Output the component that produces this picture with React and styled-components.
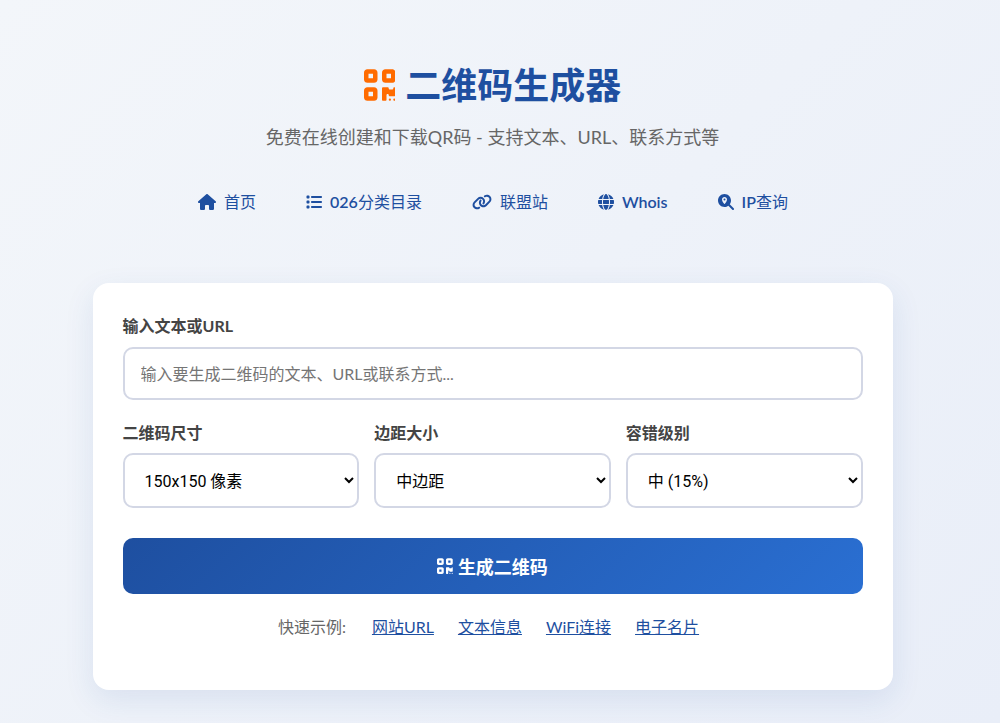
import React from "react";
import styled, { createGlobalStyle } from "styled-components";
import { FaQrcode, FaHouse, FaList, FaLink, FaGlobe, FaMagnifyingGlassLocation } from "react-icons/fa6";

const Global = createGlobalStyle`
  * { box-sizing: border-box; }
  html, body { margin: 0; padding: 0; }
  body {
    font-family: Lato, "Noto Sans CJK SC", sans-serif;
    background: linear-gradient(135deg, #f3f6fa 0%, #e9eef8 100%);
    min-height: 100vh;
  }
`;

const Page = styled.div`
  width: 985px;
  padding: 20px 92.5px 33px;
`;

const Header = styled.header`
  text-align: center;
  padding-top: 40px;
  margin-bottom: 70px;
`;

const Title = styled.h1`
  margin: 0;
  display: flex;
  align-items: center;
  justify-content: center;
  gap: 10px;
  font-size: 36px;
  line-height: 50px;
  font-weight: 700;
  color: #1e4fa0;
  svg { color: #ff6b00; width: 31.5px; height: 36px; }
`;

const Subtitle = styled.p`
  margin: 15px 0 0;
  font-size: 18px;
  line-height: 25px;
  color: #666666;
`;

const Nav = styled.nav`
  display: flex;
  justify-content: center;
  gap: 50px;
  margin-top: 41px;
  padding-left: 1px;
`;

const NavItem = styled.a`
  display: flex;
  align-items: center;
  gap: 8px;
  font-size: 16px;
  line-height: 22px;
  font-weight: 400;
  color: #1e4fa0;
  text-decoration: none;
  svg { width: ${(p) => p.$iconWidth}px; height: 16px; }
`;

const NavLatin = styled.span`
  font-weight: 600;
`;

const Card = styled.main`
  background: #ffffff;
  border-radius: 16px;
  padding: 32px 30px 30px;
  height: 407px;
  box-shadow: 0 10px 30px rgba(30, 79, 160, 0.1);
`;

const Field = styled.div`
  display: flex;
  flex-direction: column;
`;

const Label = styled.label`
  font-size: 16px;
  line-height: 22px;
  font-weight: 700;
  color: #444444;
  margin-bottom: ${(p) => (p.$tight ? 9 : 10)}px;
`;

const TextInput = styled.input`
  width: 100%;
  height: 53px;
  padding: 0 16px;
  border: 2px solid #d3d7e5;
  border-radius: 10px;
  font: inherit;
  font-size: 16px;
  outline: none;
  &::placeholder { color: #757575; }
`;

const OptionsRow = styled.div`
  display: grid;
  grid-template-columns: repeat(3, 1fr);
  gap: 15px;
  margin-top: 22px;
`;

const Select = styled.select`
  width: 100%;
  height: 55px;
  padding: 2px 16px 0;
  border: 2px solid #d3d7e5;
  border-radius: 10px;
  background: #ffffff;
  font-family: Roboto, "Noto Sans CJK SC", sans-serif;
  font-size: 16px;
  color: #000000;
  outline: none;
`;

const Generate = styled.button`
  width: 100%;
  height: 56px;
  margin-top: 30px;
  display: flex;
  align-items: center;
  justify-content: center;
  gap: 5px;
  border: 0;
  border-radius: 10px;
  background: linear-gradient(135deg, #1e4fa0 0%, #2a6fd2 100%);
  color: #ffffff;
  font: inherit;
  font-size: 18px;
  font-weight: 700;
  svg { width: 15.75px; height: 18px; }
`;

const Examples = styled.div`
  display: flex;
  justify-content: center;
  gap: 24px;
  margin-top: 22px;
  padding-right: 8px;
  font-size: 16px;
  line-height: 22px;
  color: #666666;
`;

const ExampleLabel = styled.span`
  width: 70px;
  white-space: nowrap;
`;

const ExampleLink = styled.a`
  color: #1e4fa0;
  text-decoration: underline;
`;

const navItems = [
  [FaHouse, 18, null, "首页"],
  [FaList, 16, "026", "分类目录"],
  [FaLink, 20, null, "联盟站"],
  [FaGlobe, 16, "Whois", ""],
  [FaMagnifyingGlassLocation, 16, "IP", "查询"],
];

export default function App() {
  return (
    <>
      <Global />
      <Page>
        <Header>
          <Title><FaQrcode />二维码生成器</Title>
          <Subtitle>免费在线创建和下载QR码 - 支持文本、URL、联系方式等</Subtitle>
          <Nav>
            {navItems.map(([Icon, width, latin, text]) => (
              <NavItem href="#" key={text + latin} $iconWidth={width}>
                <Icon />
                <span>{latin && <NavLatin>{latin}</NavLatin>}{text}</span>
              </NavItem>
            ))}
          </Nav>
        </Header>
        <Card>
          <Field>
            <Label>输入文本或URL</Label>
            <TextInput placeholder="输入要生成二维码的文本、URL或联系方式..." />
          </Field>
          <OptionsRow>
            <Field>
              <Label $tight>二维码尺寸</Label>
              <Select defaultValue="150"><option value="150">150x150 像素</option></Select>
            </Field>
            <Field>
              <Label $tight>边距大小</Label>
              <Select defaultValue="m"><option value="m">中边距</option></Select>
            </Field>
            <Field>
              <Label $tight>容错级别</Label>
              <Select defaultValue="m"><option value="m">中 (15%)</option></Select>
            </Field>
          </OptionsRow>
          <Generate><FaQrcode />生成二维码</Generate>
          <Examples>
            <ExampleLabel>快速示例:</ExampleLabel>
            <ExampleLink href="#">网站URL</ExampleLink>
            <ExampleLink href="#">文本信息</ExampleLink>
            <ExampleLink href="#">WiFi连接</ExampleLink>
            <ExampleLink href="#">电子名片</ExampleLink>
          </Examples>
        </Card>
      </Page>
    </>
  );
}
